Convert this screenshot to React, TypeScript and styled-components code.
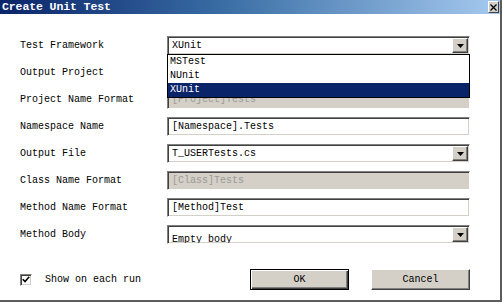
import React from "react";
import styled, { createGlobalStyle } from "styled-components";

const GlobalStyle = createGlobalStyle`
  html, body {
    margin: 0;
    padding: 0;
    background: #ffffff;
  }
  body {
    width: 503px;
    height: 304px;
    overflow: hidden;
    font-family: "Liberation Mono", "DejaVu Sans Mono", monospace;
  }
`;

const Window = styled.div`
  width: 500px;
  height: 300px;
  display: flex;
  flex-direction: column;
  background: #ffffff;
  border-right: 2px solid #5c5c5c;
  border-bottom: 2px solid #5c5c5c;
`;

const TitleBar = styled.div`
  height: 14px;
  flex: none;
  display: flex;
  align-items: center;
  justify-content: space-between;
  padding: 0 1px 0 2px;
  background: linear-gradient(to right, #0a246a 0%, #3a6ea5 45%, #a6caf0 100%);
`;

const Title = styled.span`
  color: #ffffff;
  font-weight: bold;
  font-size: 11.5px;
  line-height: 14px;
  letter-spacing: -0.1px;
`;

const CloseButton = styled.div`
  width: 11px;
  height: 12px;
  box-sizing: border-box;
  display: flex;
  align-items: center;
  justify-content: center;
  background: #d4d0c8;
  border: 1px solid;
  border-color: #ffffff #404040 #404040 #ffffff;
`;

const Body = styled.div`
  display: flex;
  flex-direction: column;
  padding: 22px 30px 0 20px;
`;

const Form = styled.div`
  display: grid;
  grid-template-columns: 147px 303px;
  grid-auto-rows: 19px;
  row-gap: 8px;
  align-items: center;
`;

const Label = styled.div`
  font-size: 10px;
  line-height: 12px;
  color: #000000;
`;

const Field = styled.div<{ $disabled?: boolean }>`
  position: relative;
  height: 19px;
  box-sizing: border-box;
  display: flex;
  align-items: stretch;
  background: ${(p) => (p.$disabled ? "#d4d0c8" : "#ffffff")};
  border: 1px solid;
  border-color: #808080 #ffffff #ffffff #808080;
  box-shadow: inset 1px 1px 0 #404040, inset -1px -1px 0 #d4d0c8;
`;

const Value = styled.div<{ $disabled?: boolean; $drop?: number }>`
  flex: 1;
  overflow: hidden;
  padding: ${(p) => p.$drop ?? 2}px 0 0 4px;
  box-sizing: border-box;
  font-size: 10px;
  line-height: 13px;
  white-space: nowrap;
  color: ${(p) => (p.$disabled ? "#9c9a94" : "#000000")};
`;

const DropButton = styled.div`
  width: 16px;
  flex: none;
  margin: 1px 1px 1px 0;
  box-sizing: border-box;
  display: flex;
  align-items: center;
  justify-content: center;
  background: #d4d0c8;
  border: 1px solid;
  border-color: #ffffff #404040 #404040 #ffffff;
  box-shadow: inset -1px -1px 0 #808080;
`;

const DropList = styled.div`
  position: absolute;
  top: 17px;
  left: -1px;
  width: 303px;
  box-sizing: border-box;
  border: 1px solid #000000;
  background: #ffffff;
  z-index: 2;
`;

const ListItem = styled.div<{ $selected?: boolean }>`
  height: 14px;
  line-height: 14px;
  padding-left: 2px;
  font-size: 10px;
  color: ${(p) => (p.$selected ? "#ffffff" : "#000000")};
  background: ${(p) => (p.$selected ? "#0a246a" : "transparent")};
`;

const Footer = styled.div`
  margin-top: 25px;
  display: flex;
  align-items: center;
  justify-content: space-between;
`;

const CheckGroup = styled.label`
  display: flex;
  align-items: center;
  gap: 13px;
  font-size: 10px;
  color: #000000;
`;

const CheckBox = styled.div`
  width: 12px;
  height: 12px;
  box-sizing: border-box;
  display: flex;
  align-items: center;
  justify-content: center;
  background: #ffffff;
  border: 1px solid;
  border-color: #808080 #ffffff #ffffff #808080;
  box-shadow: inset 1px 1px 0 #404040, inset -1px -1px 0 #d4d0c8;
`;

const Buttons = styled.div`
  display: flex;
  gap: 22px;
`;

const Button = styled.div<{ $default?: boolean }>`
  width: 99px;
  height: 21px;
  box-sizing: border-box;
  display: flex;
  align-items: center;
  justify-content: center;
  background: #d4d0c8;
  font-size: 10px;
  color: #000000;
  border: 1px solid;
  border-color: ${(p) =>
    p.$default ? "#000000" : "#ffffff #404040 #404040 #ffffff"};
  box-shadow: ${(p) =>
    p.$default
      ? "inset 1px 1px 0 #ffffff, inset -1px -1px 0 #404040, inset -2px -2px 0 #808080"
      : "inset -1px -1px 0 #808080"};
`;

const Arrow = () => (
  <svg width="7" height="4" viewBox="0 0 7 4">
    <path d="M0 0h7L3.5 4z" fill="#000" />
  </svg>
);

interface ComboProps {
  value: string;
  drop?: number;
  children?: React.ReactNode;
}

function Combo(props: ComboProps) {
  return (
    <Field>
      <Value $drop={props.drop}>{props.value}</Value>
      <DropButton>
        <Arrow />
      </DropButton>
      {props.children}
    </Field>
  );
}

function TextField(props: { value: string; disabled?: boolean }) {
  return (
    <Field $disabled={props.disabled}>
      <Value $disabled={props.disabled}>{props.value}</Value>
    </Field>
  );
}

const frameworks = ["MSTest", "NUnit", "XUnit"];

export default function App() {
  return (
    <>
      <GlobalStyle />
      <Window>
        <TitleBar>
          <Title>Create Unit Test</Title>
          <CloseButton>
            <svg width="7" height="7" viewBox="0 0 7 7">
              <path d="M0.5 0.5l6 6M6.5 0.5l-6 6" stroke="#000" strokeWidth="1.3" />
            </svg>
          </CloseButton>
        </TitleBar>
        <Body>
          <Form>
            <Label>Test Framework</Label>
            <Combo value="XUnit">
              <DropList>
                {frameworks.map((f) => (
                  <ListItem key={f} $selected={f === "XUnit"}>
                    {f}
                  </ListItem>
                ))}
              </DropList>
            </Combo>

            <Label>Output Project</Label>
            <Combo value="" />

            <Label>Project Name Format</Label>
            <TextField value="[Project]Tests" disabled />

            <Label>Namespace Name</Label>
            <TextField value="[Namespace].Tests" />

            <Label>Output File</Label>
            <Combo value="T_USERTests.cs" />

            <Label>Class Name Format</Label>
            <TextField value="[Class]Tests" disabled />

            <Label>Method Name Format</Label>
            <TextField value="[Method]Test" />

            <Label>Method Body</Label>
            <Combo value="Empty body" drop={7} />
          </Form>
          <Footer>
            <CheckGroup>
              <CheckBox>
                <svg width="8" height="7" viewBox="0 0 8 7">
                  <path d="M0.8 3.2l2.2 2.3L7.2 0.8" stroke="#000" strokeWidth="1.6" fill="none" />
                </svg>
              </CheckBox>
              Show on each run
            </CheckGroup>
            <Buttons>
              <Button $default>OK</Button>
              <Button>Cancel</Button>
            </Buttons>
          </Footer>
        </Body>
      </Window>
    </>
  );
}
